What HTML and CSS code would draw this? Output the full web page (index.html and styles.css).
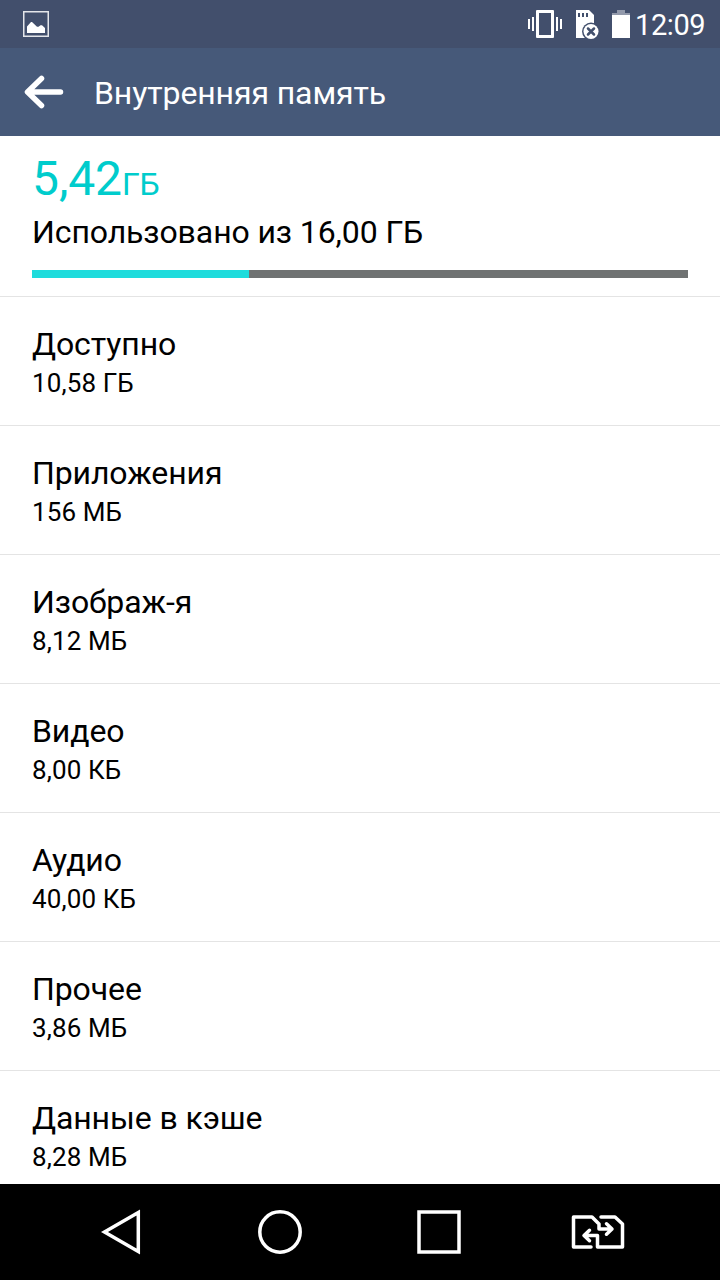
FILE: index.html
```html
<!DOCTYPE html>
<html lang="ru">
<head>
  <meta charset="UTF-8">
  <meta name="viewport" content="width=device-width, initial-scale=1.0">
  <title>Внутренняя память</title>
  <link rel="stylesheet" href="styles.css">
</head>
<body>
  <div class="status-bar">
    <svg class="icon-picture" width="26" height="26" viewBox="0 0 26 26">
      <rect x="0.75" y="0.75" width="24.5" height="24.5" fill="none" stroke="#e4e6ea" stroke-width="1.5"/>
      <path d="M4 22v-6.500l4-4.500h1l5 4.700h1.500l2-1.500h1.500l3 2.800v5z" fill="#fff"/>
    </svg>
    <div class="status-right">
      <svg class="icon-vibrate" width="34" height="28" viewBox="0 0 34 28">
        <path d="M0 9h2v10H0zM4 7h2v14H4zM28 7h2v14h-2zM32 9h2v10h-2z" fill="#fff"/>
        <path fill-rule="evenodd" d="M9 0h16a1 1 0 0 1 1 1v26a1 1 0 0 1-1 1H9a1 1 0 0 1-1-1V1a1 1 0 0 1 1-1zM11 3v22h12V3z" fill="#fff"/>
      </svg>
      <svg class="icon-sd" width="23" height="29" viewBox="0 0 23 29">
        <path d="M0 0h13l5 5v23H0z" fill="#fff"/>
        <path d="M2 3h2v4H2zM6 3h2v4H6zM10 3h2v4h-2z" fill="#424f6c"/>
        <circle cx="15" cy="21.5" r="9" fill="#424f6c"/>
        <circle cx="15" cy="21.5" r="7.5" fill="#fff"/>
        <path d="M12 18.500l6 6M18 18.500l-6 6" stroke="#424f6c" stroke-width="2.500" stroke-linecap="round"/>
      </svg>
      <svg class="icon-battery" width="18" height="28" viewBox="0 0 18 28">
        <path d="M5 0h8v3h5v2H0V3h5z" fill="#9299ab"/>
        <path d="M0 5h18v23H0z" fill="#fff"/>
      </svg>
      <span class="time">12:09</span>
    </div>
  </div>

  <header class="title-bar">
    <svg width="40" height="34" viewBox="0 0 40 34">
      <path d="M17.500 3.500L3.500 17l14 13.500M4.500 17H36.500" fill="none" stroke="#fff" stroke-width="5.500" stroke-linecap="round" stroke-linejoin="round"/>
    </svg>
    <h1>Внутренняя память</h1>
  </header>

  <main>
    <section class="summary">
      <div class="used">5,42<span>ГБ</span></div>
      <div class="total">Использовано из 16,00 ГБ</div>
      <div class="bar"><div class="bar-fill"></div></div>
    </section>
    <ul class="list">
      <li><h2>Доступно</h2><p>10,58 ГБ</p></li>
      <li><h2>Приложения</h2><p>156 МБ</p></li>
      <li><h2>Изображ-я</h2><p>8,12 МБ</p></li>
      <li><h2>Видео</h2><p>8,00 КБ</p></li>
      <li><h2>Аудио</h2><p>40,00 КБ</p></li>
      <li><h2>Прочее</h2><p>3,86 МБ</p></li>
      <li><h2>Данные в кэше</h2><p>8,28 МБ</p></li>
    </ul>
  </main>

  <nav class="nav-bar">
    <svg width="160" height="96" viewBox="0 0 160 96">
      <path d="M98.300 28.500v39L64.500 48z"/>
    </svg>
    <svg width="160" height="96" viewBox="0 0 160 96">
      <circle cx="80" cy="48" r="20.200"/>
    </svg>
    <svg width="160" height="96" viewBox="0 0 160 96">
      <rect x="59" y="28" width="40" height="40"/>
    </svg>
    <svg width="160" height="96" viewBox="0 0 160 96">
      <path d="M71 63H53.500V33H72l7 7v5h12M86.500 39.800l5.500 5.200-5.500 5.200M81 33h14l7.500 7v23H77.500V51.500H65M69.500 46.300L64 51.500l5.500 5.200" stroke-linecap="round" stroke-linejoin="round"/>
    </svg>
  </nav>
</body>
</html>
```
FILE: styles.css
```css
* {
  box-sizing: border-box;
}
body {
  display: flex;
  flex-direction: column;
  height: 1280px;
  margin: 0;
  overflow: hidden;
  background: #fff;
  color: #000;
  font-family: Roboto, "Noto Sans", sans-serif;
}
h1, h2, p, ul {
  margin: 0;
  padding: 0;
  font-weight: normal;
}
svg {
  display: block;
  flex: none;
}

/* status bar */
.status-bar {
  display: flex;
  flex: none;
  justify-content: space-between;
  height: 48px;
  padding: 0 14px 0 23px;
  background: #424f6c;
  color: #fff;
}
.icon-picture {
  margin-top: 11px;
}
.status-right {
  display: flex;
  padding-top: 10px;
}
.icon-sd {
  margin-left: 14px;
}
.icon-battery {
  margin-left: 13px;
}
.time {
  width: 71px;
  margin-left: 5px;
  font-size: 29px;
  line-height: 30px;
  letter-spacing: -0.4px;
  white-space: nowrap;
}

.title-bar {
  display: flex;
  flex: none;
  align-items: center;
  height: 88px;
  padding-left: 24px;
  background: #465979;
  color: #fff;
}
.title-bar h1 {
  margin-left: 30px;
  padding-top: 2px;
  font-size: 32px;
  line-height: 40px;
  letter-spacing: -0.1px;
}

main {
  flex: 1;
  min-height: 0;
  overflow: hidden;
}
.summary {
  height: 161px;
  padding: 15px 32px 0;
  border-bottom: 1px solid #e4e4e4;
}
.used {
  height: 61px;
  color: #00cccc;
  font-size: 48px;
  line-height: 56px;
  letter-spacing: -0.1px;
}
.used span {
  font-size: 32px;
  letter-spacing: -0.4px;
}
.total {
  font-size: 32px;
  line-height: 40px;
  letter-spacing: -0.1px;
}
.bar {
  height: 8px;
  margin-top: 18px;
  background: #6f7272;
}
.bar-fill {
  width: 217px;
  height: 8px;
  background: #1edcdc;
}

.list {
  list-style: none;
}
.list li {
  height: 129px;
  padding: 27px 32px 0;
  border-bottom: 1px solid #e4e4e4;
}
.list h2 {
  font-size: 32px;
  line-height: 40px;
  letter-spacing: -0.1px;
}
.list p {
  font-size: 26px;
  line-height: 38px;
  letter-spacing: 0.12px;
}

.nav-bar {
  display: flex;
  flex: none;
  justify-content: center;
  height: 96px;
  background: #000;
}
.nav-bar svg {
  fill: none;
  stroke: #fff;
  stroke-width: 3.5;
}
```
